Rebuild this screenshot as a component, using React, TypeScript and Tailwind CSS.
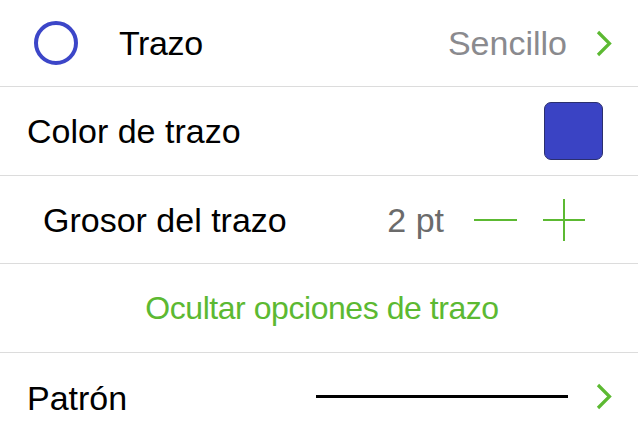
import React from 'react';

const GREEN = '#5cb932';

function Chevron() {
  return (
    <svg width="16" height="27" viewBox="0 0 16 27" fill="none" className="shrink-0">
      <polyline points="2,2 13.5,13.5 2,25" stroke={GREEN} strokeWidth="3.2" strokeLinecap="butt" strokeLinejoin="miter" />
    </svg>
  );
}

function Row({ className = '', children }: { className?: string; children: React.ReactNode }) {
  return <div className={`flex items-center border-b border-[#dcdcdc] ${className}`}>{children}</div>;
}

export default function App() {
  return (
    <div
      className="w-[638px] h-[439px] overflow-hidden bg-white text-[34px] leading-none text-black"
      style={{ fontFamily: '"Liberation Sans", Arial, sans-serif' }}
    >
      <Row className="h-[87px] pl-[34px] pr-[26px]">
        <span className="w-[44px] h-[44px] rounded-full border-4 border-[#3c46c8] shrink-0" />
        <span className="ml-[41px] tracking-[-0.4px]">Trazo</span>
        <span className="ml-auto text-[#8a8a8e]">Sencillo</span>
        <span className="ml-[29px] flex">
          <Chevron />
        </span>
      </Row>

      <Row className="h-[89px] pl-[27px] pr-[35px]">
        <span>Color de trazo</span>
        <span className="ml-auto w-[59px] h-[58px] rounded-[7px] bg-[#3a43c4] border border-[#2b2f6e]" />
      </Row>

      <Row className="h-[88px] pl-[43px] pr-[53px]">
        <span>Grosor del trazo</span>
        <span className="ml-auto text-[#6b6b6b]">2 pt</span>
        <button className="ml-[30px] w-[43px] h-[42px] flex items-center">
          <span className="block w-full h-[2px] bg-[#5cb932]" />
        </button>
        <button className="ml-[26px] w-[42px] h-[42px] relative">
          <span className="absolute left-0 right-0 top-[20px] h-[2px] bg-[#5cb932]" />
          <span className="absolute top-0 bottom-0 left-[20px] w-[2px] bg-[#5cb932]" />
        </button>
      </Row>

      <Row className="h-[89px] justify-center">
        <span className="text-[32px] text-[#5cb932] tracking-[-0.45px] pl-[6px]">Ocultar opciones de trazo</span>
      </Row>

      <div className="flex items-center h-[86px] pl-[27px] pr-[26px]">
        <span className="pt-[3px]">Patrón</span>
        <span className="ml-auto w-[252px] h-[3px] bg-black" />
        <span className="ml-[28px] flex">
          <Chevron />
        </span>
      </div>
    </div>
  );
}
